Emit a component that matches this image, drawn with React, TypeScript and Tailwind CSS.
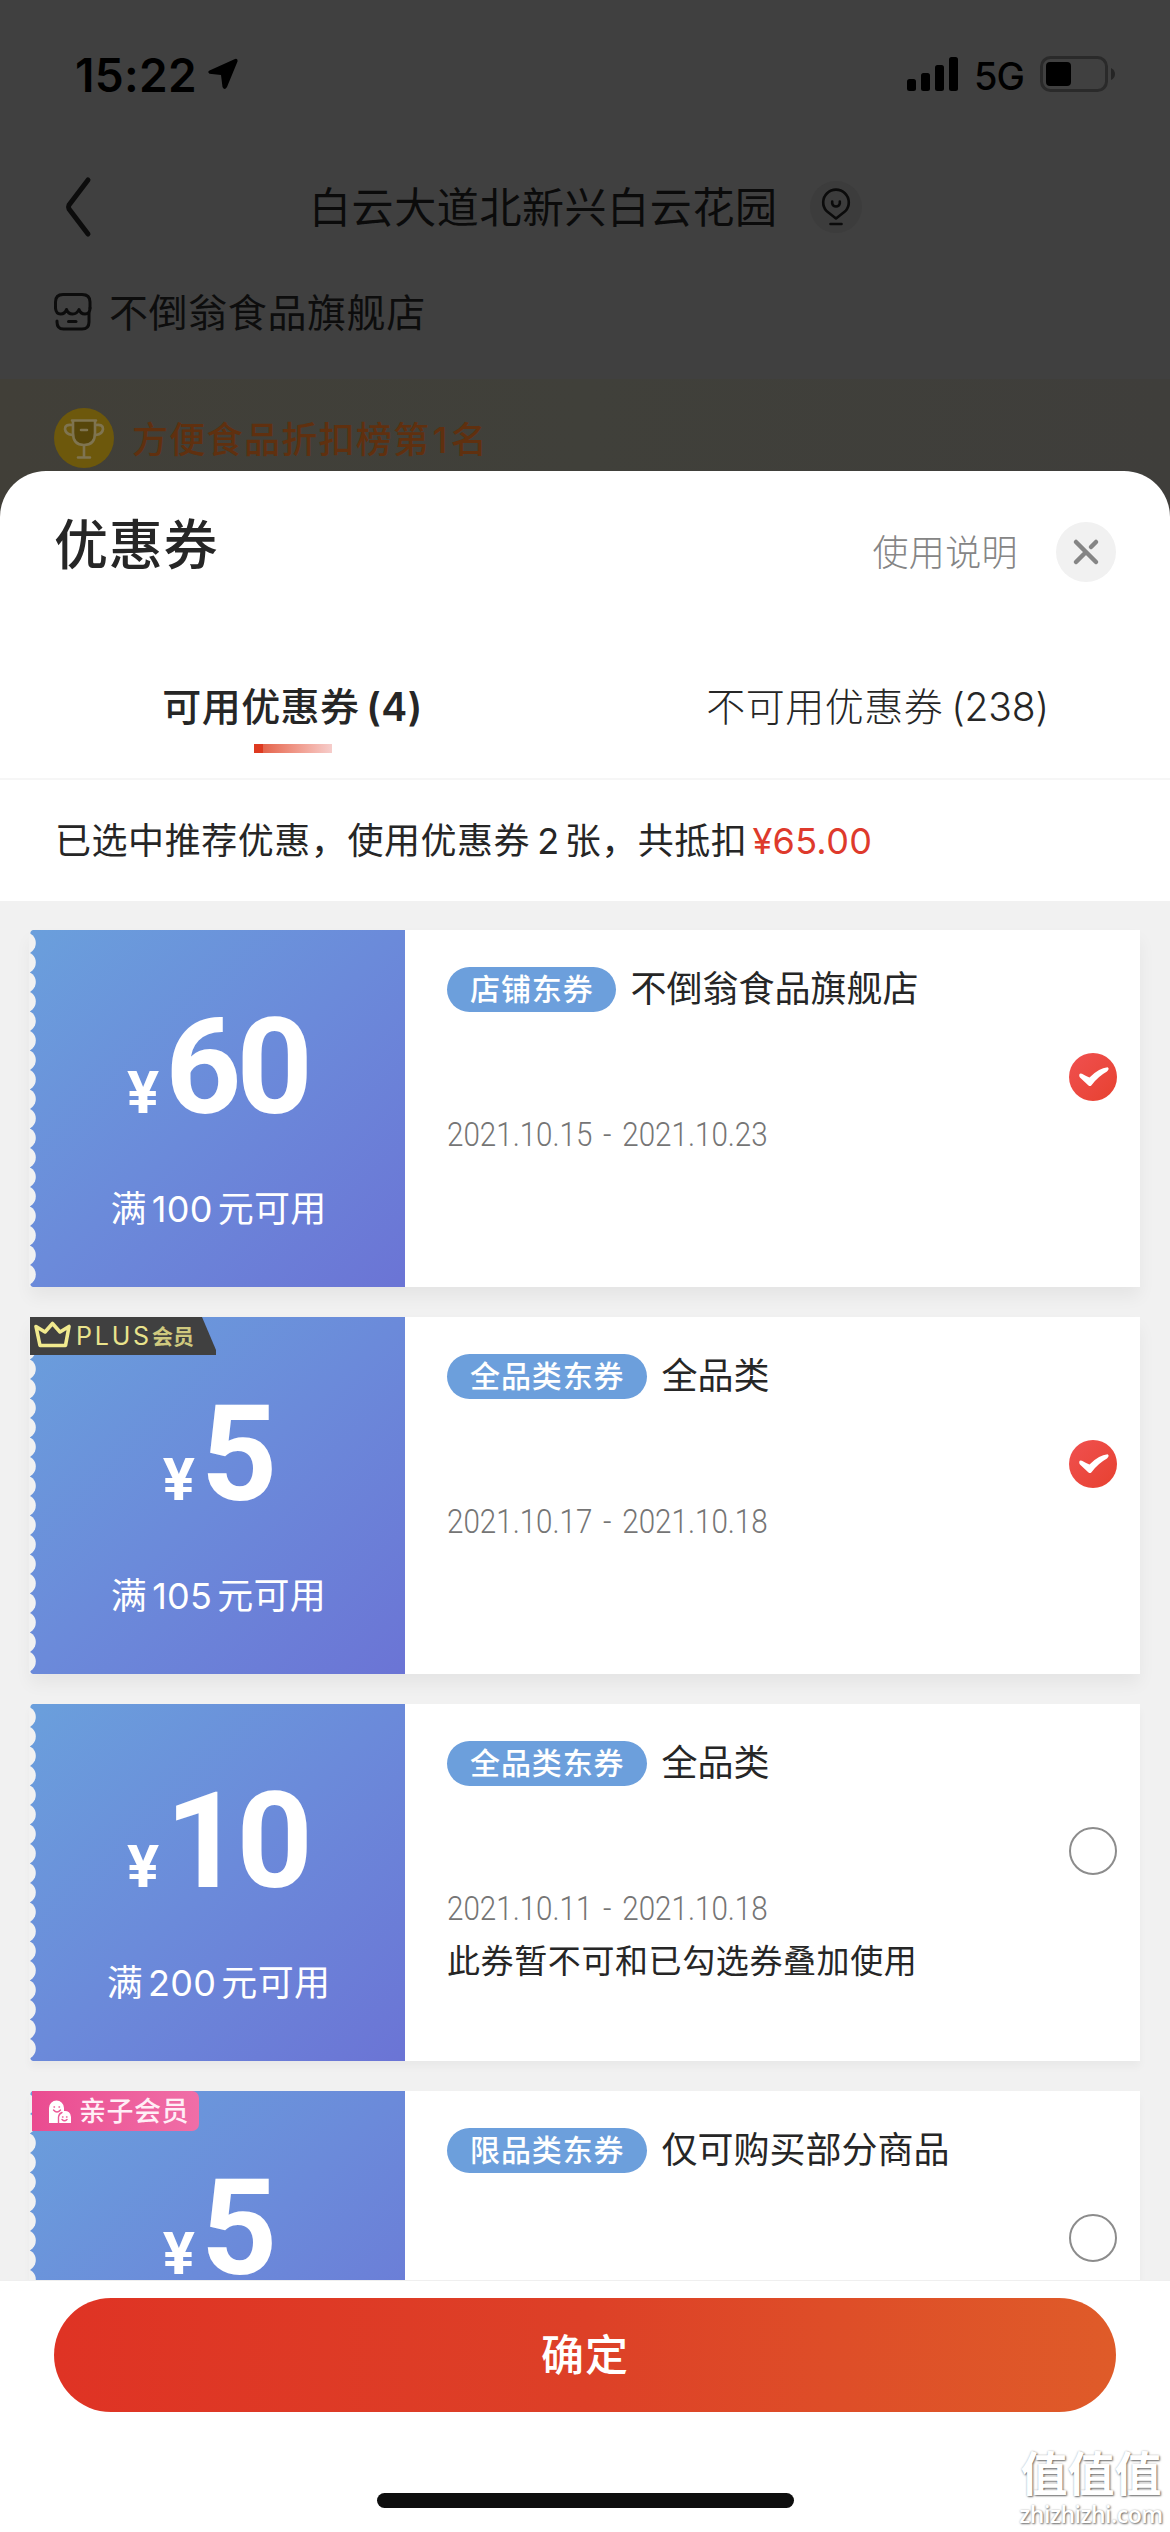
import clsx from "clsx";

type Badge = "plus" | "family";

interface Coupon {
  amount: string;
  limit?: string;
  tag: string;
  title: string;
  period?: string;
  note?: string;
  checked: boolean;
  badge?: Badge;
}

const COUPONS: Coupon[] = [
  { amount: "60", limit: "100", tag: "店铺东券",   title: "不倒翁食品旗舰店", period: "2021.10.15 - 2021.10.23", checked: true },
  { amount: "5",  limit: "105", tag: "全品类东券", title: "全品类",           period: "2021.10.17 - 2021.10.18", checked: true, badge: "plus" },
  { amount: "10", limit: "200", tag: "全品类东券", title: "全品类",           period: "2021.10.11 - 2021.10.18", checked: false, note: "此券暂不可和已勾选券叠加使用" },
  { amount: "5",                tag: "限品类东券", title: "仅可购买部分商品", checked: false, badge: "family" },
];

function StatusBar() {
  return (
    <div className="flex h-[150px] items-start pl-[75px] pr-[54px] pt-[47px] text-black">
      <div className="text-[46px] font-semibold leading-[56px] tracking-[0.3px]">15:22</div>
      <svg className="ml-[10px] mt-[11px]" width="31" height="32" viewBox="0 0 31 32">
        <path d="M28 1 L2.500 12.500 Q0 14 2.500 15.800 L14 17 L15.500 29 Q17.500 33 20 29 L30.500 3.500 Q31 .3 28 1Z" />
      </svg>
      <svg className="ml-auto mt-[10px]" width="52" height="34" viewBox="0 0 52 34">
        <rect x="0" y="22" width="9" height="12" rx="2.500" />
        <rect x="14" y="16" width="9" height="18" rx="2.500" />
        <rect x="28" y="8" width="9" height="26" rx="2.500" />
        <rect x="42" y="0" width="9" height="34" rx="2.500" />
      </svg>
      <div className="ml-[15px] mt-[5px] w-[50px] text-[38px] font-medium leading-[48px] tracking-[-1px]">5G</div>
      <svg className="ml-[16px] mt-[9px]" width="76" height="36" viewBox="0 0 76 36">
        <rect x="1.500" y="1.500" width="65" height="33" rx="9" fill="none" stroke="#2a2a2a" strokeWidth="3" />
        <rect x="6" y="6" width="25" height="24" rx="4" />
        <path d="M71 12 Q75 14 75 18 Q75 22 71 24Z" fill="#252525" />
      </svg>
    </div>
  );
}

function AddressBar() {
  return (
    <div className="flex h-[114px] items-center pl-[64px]">
      <svg width="28" height="62" viewBox="0 0 28 62" fill="none" stroke="#0c0c0c" strokeWidth="5" strokeLinecap="round" strokeLinejoin="round">
        <path d="M24 4 L5 29 Q4 31 5 33 L24 58" />
      </svg>
      <div className="ml-[217px] w-[472px] whitespace-nowrap text-[42px] tracking-[0.6px] text-[#0b0b0b]">白云大道北新兴白云花园</div>
      <div className="ml-[29px] flex size-[52px] items-center justify-center rounded-full bg-[#3c3c3c]">
        <svg width="30" height="38" viewBox="0 0 30 38" fill="none" stroke="#0b0b0b" strokeWidth="2.600" strokeLinecap="round">
          <path d="M15 30.500 L5.500 23 A12.800 12.800 0 1 1 24.500 23 Z" strokeLinejoin="round" />
          <path d="M11.200 13.500 V15.500 A3.900 3.900 0 0 0 18.800 15.500 V13.500" />
          <path d="M9.500 36 H20.500" />
        </svg>
      </div>
    </div>
  );
}

function ShopRow() {
  return (
    <div className="flex h-[115px] items-start pl-[54px] pt-[22px]">
      <svg className="mt-[7px]" width="38" height="38" viewBox="0 0 38 38" fill="none" stroke="#0c0c0c" strokeWidth="3" strokeLinecap="round" strokeLinejoin="round">
        <path d="M1.500 15 V9 Q1.500 1.500 9 1.500 H28 Q36 1.500 36 9 V15" />
        <path d="M1.500 15 Q2 21 6.500 21 Q11 21 12.500 16.500 Q14 21 18.500 21 Q23 21 25 16.500 Q26.500 21 31 21 Q36 21 36 15" />
        <path d="M3 28 V29 Q3 36 9.500 36 H28 Q35 36 35 29 V20" />
        <path d="M14.500 28.500 H22" />
      </svg>
      <div className="ml-[17px] text-[39px] leading-[54px] tracking-[0.600px] text-[#0d0d0d]">不倒翁食品旗舰店</div>
    </div>
  );
}

function RankBanner() {
  return (
    <div className="flex h-[150px] items-start bg-linear-to-r from-[#413f38] via-[#40403a] to-[#3f3e3b] pl-[54px] pt-[29px]">
      <svg width="60" height="60" viewBox="0 0 60 60">
        <circle cx="30" cy="30" r="30" fill="#6d580c" />
        <path d="M19 13 H41 V25 Q41 37 30 37 Q19 37 19 25Z" fill="#57460a" />
        <g fill="none" stroke="#7f7450" strokeWidth="2.600" strokeLinecap="round" strokeLinejoin="round">
          <path d="M18 12.500 H42 M19 13 V25 Q19 37 30 37 Q41 37 41 25 V13" />
          <path d="M18 17 Q11 16 11 21 Q11.500 26 18 27 M42 17 Q49 16 49 21 Q48.500 26 42 27" />
          <path d="M30 38 V48 M24 49.500 H36 M27 22 H33" />
        </g>
      </svg>
      <div className="ml-[18px] mt-[6px] text-[36px] font-medium leading-[52px] tracking-[1.300px] text-[#60300f]">
        方便食品折扣榜第<span className="mx-[2px]">1</span>名
      </div>
    </div>
  );
}

function SheetHeader() {
  return (
    <div className="flex h-[167px] items-start pl-[54px] pr-[54px]">
      <h1 className="mt-[35px] text-[54px] font-medium leading-[80px] tracking-[0.800px] text-[#262626]">优惠券</h1>
      <div className="ml-auto mt-[55px] text-[36px] font-light leading-[54px] tracking-[0.400px] text-[#858585]">使用说明</div>
      <div className="ml-[38px] mt-[51px] flex size-[60px] items-center justify-center rounded-full bg-[#f1f1f1]">
        <svg width="28" height="28" viewBox="0 0 28 28" stroke="#858585" strokeWidth="4.500" strokeLinecap="round">
          <path d="M4 4 L24 24 M4 24 L14 14 M19 9 L24 4" />
        </svg>
      </div>
    </div>
  );
}

function Tabs() {
  return (
    <div className="grid h-[142px] grid-cols-2 border-b-2 border-[#f6f6f6] text-[39px] leading-[54px] text-[#262626]">
      <div className="flex flex-col items-center pt-[42px]">
        <div className="flex items-center font-medium tracking-[0.400px]">
          可用优惠券<span className="ml-[7px] font-semibold">(4)</span>
        </div>
        <div className="mt-[10px] flex h-[9px] w-[78px]">
          <div className="w-[9px] bg-[#de3a20]" />
          <div className="flex-1 bg-linear-to-r from-[#e4634b] to-[#f6cdcb]" />
        </div>
      </div>
      <div className="flex items-start justify-center pt-[42px] font-light tracking-[0.500px]">
        不可用优惠券<span className="ml-[8px] font-light tracking-[-0.200px]">(238)</span>
      </div>
    </div>
  );
}

function Summary() {
  return (
    <div className="flex h-[121px] items-center pl-[55px] text-[36px] tracking-[0.550px] text-[#262626]">
      已选中推荐优惠，使用优惠券<span className="ml-[7px] mr-[5px]">2</span>张，共抵扣
      <span className="ml-[5px] tracking-[0.300px] text-[#de3a2c]">¥65.00</span>
    </div>
  );
}

function PlusBadge() {
  return (
    <div className="absolute left-0 top-0 flex h-[38px] w-[186px] items-center bg-[#404040] pl-[4px] [clip-path:polygon(0_0,172px_0,186px_33px,186px_100%,0_100%)]">
      <svg className="-mt-[4px]" width="37" height="27" viewBox="0 0 37 27" fill="none" stroke="#f1ea8e" strokeWidth="3.600" strokeLinejoin="round">
        <path d="M2 5.500 L11 11 L18.500 2.500 L26 11 L35 5.500 L31.500 24.500 H6Z" />
      </svg>
      <span className="ml-[5px] text-[25px] leading-none tracking-[2.800px] text-[#e9e38c]">PLUS</span>
      <span className="text-[21px] font-bold leading-none text-[#cfc97e]">会员</span>
    </div>
  );
}

function FamilyBadge() {
  return (
    <div className="absolute left-[2px] top-0 flex h-[40px] w-[167px] items-center rounded-r-[7px] bg-linear-to-r from-[#ea4b90] to-[#f06ea7] pl-[16px]">
      <svg width="24" height="24" viewBox="0 0 24 24">
        <path d="M1 24 V9 A7.500 7.500 0 0 1 16 9 V12 A6 6 0 0 1 23 18 V24Z" fill="#fff" />
        <g fill="none" stroke="#ec5a98" strokeWidth="1.400" strokeLinecap="round">
          <path d="M6 8 H6.500 M11 8 H11.500 M5.500 11 Q9 15 12.500 11" />
          <path d="M10.500 24 V18 Q11 14.500 14 13.500 M14.500 18 H15 M18.500 18 H19 M14 20.500 Q16.500 23 19 20.500" />
        </g>
      </svg>
      <span className="ml-[7px] text-[27px] font-medium leading-none tracking-[0.500px] text-[#ffeef6]">亲子会员</span>
    </div>
  );
}

// perforated left edge of the ticket
function Perforation() {
  return (
    <svg className="absolute left-[-1px] top-0" width="7" height="357" viewBox="0 0 7 357" fill="#f1f1f1">
      <path d="M0 0 H4 Q1 1 1.500 3.500 L0 5Z" />
      {Array.from({ length: 18 }, (_, i) => (
        <circle key={i} cx="-4" cy={13 + i * 19.5} r="10.800" />
      ))}
      <path d="M0 357 H4 Q1 356 1.500 353.500 L0 352Z" />
    </svg>
  );
}

function CheckMark({ checked }: { checked: boolean }) {
  if (!checked) return <div className="size-[48px] rounded-full border-2 border-[#8c8c8c]" />;
  return (
    <div className="flex size-[48px] items-center justify-center rounded-full bg-linear-to-br from-[#f0504f] to-[#e7412f]">
      <svg width="48" height="48" viewBox="0 0 48 48" fill="#fff">
        <path d="M10.500 21 Q9.500 23.500 12 25.500 L19.500 32.500 Q21 33.800 22.500 32.200 Q29 23.500 38 18.500 Q41 15.500 38.500 14.300 Q30 15 20.500 24.500 Q16.500 23 13 20.800 Q11.200 20 10.500 21Z" />
      </svg>
    </div>
  );
}

function CouponCard({ coupon }: { coupon: Coupon }) {
  return (
    <div
      className={clsx(
        "relative flex h-[357px] w-[1110px] shrink-0 bg-white",
        coupon.checked ? "shadow-[0_10px_16px_rgba(0,0,0,0.05)]" : "shadow-[0_6px_8px_rgba(0,0,0,0.035)]",
      )}
    >
      <div className="relative w-[375px] bg-linear-to-br from-[#6a9fdc] via-[#6b8ada] to-[#6b74d5] text-white">
        <div className="mt-[86px] flex h-[103px] items-baseline justify-center font-['Roboto'] font-bold">
          <span className="text-[60px] leading-[60px]">¥</span>
          <span className="ml-[6px] text-[133px] leading-[103px] tracking-[-5px]">{coupon.amount}</span>
        </div>
        {coupon.limit && (
          <div className="mt-[63px] flex items-center justify-center pl-[2px] text-[36px] leading-[54px] tracking-[0.300px]">
            满<span className="mx-[5px]">{coupon.limit}</span>元可用
          </div>
        )}
        <Perforation />
      </div>

      <div className="flex flex-1 flex-col pl-[42px] pt-[32px]">
        <div className="flex h-[54px] items-center">
          <div className="flex h-[45px] items-center rounded-full bg-[#6c9fdc] pl-[23px] pr-[22px] text-[30px] font-medium leading-none tracking-[0.900px] text-white">{coupon.tag}</div>
          <div className="ml-[15px] text-[36px] leading-[54px] text-[#262626]">{coupon.title}</div>
        </div>
        {coupon.period && (
          <div className="mt-[94px] origin-left scale-x-[0.870] font-['Roboto'] text-[34px] font-light leading-[48px] [word-spacing:4px] text-[#757575]">{coupon.period}</div>
        )}
        {coupon.note && <div className="mt-[4px] text-[33px] leading-[50px] tracking-[0.600px] text-[#262626]">{coupon.note}</div>}
      </div>

      <div className="mr-[23px] mt-[123px]">
        <CheckMark checked={coupon.checked} />
      </div>
      {coupon.badge === "plus" && <PlusBadge />}
      {coupon.badge === "family" && <FamilyBadge />}
    </div>
  );
}

function Watermark() {
  return (
    <div className="absolute bottom-[3px] right-[8px] z-20 flex w-[142px] flex-col items-center whitespace-nowrap text-white [text-shadow:1px_1px_2px_rgba(0,0,0,0.550),0_0_2px_rgba(0,0,0,0.250)]">
      <div className="text-[47px] font-bold leading-[50px]">值值值</div>
      <div className="font-['Open_Sans'] text-[23px] font-semibold leading-[30px] tracking-[-0.500px]">zhizhizhi.com</div>
    </div>
  );
}

export default function App() {
  return (
    <div className="relative flex h-[2532px] w-[1170px] flex-col overflow-hidden bg-[#404040] font-['Inter','Noto_Sans_CJK_SC',sans-serif]">
      <StatusBar />
      <AddressBar />
      <ShopRow />
      <RankBanner />

      <div className="z-10 -mt-[58px] flex flex-1 flex-col overflow-hidden rounded-t-[46px] bg-white">
        <SheetHeader />
        <Tabs />
        <Summary />
        <div className="flex h-[1380px] shrink-0 flex-col gap-[30px] overflow-hidden border-b border-[#efefef] bg-[#f1f1f1] pl-[30px] pt-[29px]">
          {COUPONS.map((c, i) => <CouponCard key={i} coupon={c} />)}
        </div>
        <div className="flex flex-1 flex-col items-center pt-[17px]">
          <button className="h-[114px] w-[1062px] rounded-full bg-linear-to-r from-[#df3324] via-[#dd4027] to-[#df5b29] text-[43px] font-medium tracking-[1px] text-white">确定</button>
          <div className="mt-[81px] h-[15px] w-[417px] rounded-full bg-[#0e0e0e]" />
        </div>
      </div>
      <Watermark />
    </div>
  );
}
